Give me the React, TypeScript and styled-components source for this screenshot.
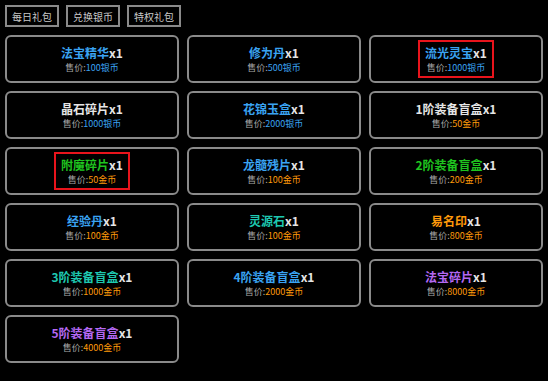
import React from 'react';
import styled, {createGlobalStyle} from "styled-components";

const Global = createGlobalStyle`
html, body {
  margin: 0;
  background: #000;
  font-family: "Noto Sans CJK SC", "Noto Sans", sans-serif;
}
`

const Page = styled.div`
padding: 5px;
display: flex;
flex-direction: column;
gap: 8px;
`

const Tabs = styled.div`
display: flex;
gap: 7px;
`

const Tab = styled.div`
width: 54px;
height: 22px;
box-sizing: border-box;
border: 2px solid #8a8a8a;
color: #c8c8c8;
font-size: 10px;
display: flex;
align-items: center;
justify-content: center;
`

const Grid = styled.div`
display: grid;
grid-template-columns: repeat(3, 174px);
grid-auto-rows: 48px;
gap: 8px;
`

const Card = styled.div`
box-sizing: border-box;
border: 2px solid #8a8a8a;
border-radius: 6px;
display: flex;
align-items: center;
justify-content: center;
`

// red frame only on the highlighted items
const Label = styled.div<{ $marked?: boolean }>`
border: 2px solid ${p => p.$marked ? '#e8141c' : 'transparent'};
padding: 2px 5px;
display: flex;
flex-direction: column;
align-items: center;
`

const Title = styled.div<{ $color: string }>`
font-size: 12px;
font-weight: bold;
line-height: 17px;
color: ${p => p.$color};
span { color: #e6e6e6; }
`

const Price = styled.div<{ $color: string }>`
font-size: 9px;
line-height: 13px;
color: #a8a8a8;
span { color: ${p => p.$color}; }
`

const BLUE = '#3aa3f2';
const WHITE = '#e6e6e6';
const GREEN = '#1fc41f';
const TEAL = '#1ec8b0';
const ORANGE = '#ff9a0a';
const PURPLE = '#b468f2';

const items = [
    {name: '法宝精华', color: BLUE, price: '100银币', pc: BLUE},
    {name: '修为丹', color: BLUE, price: '500银币', pc: BLUE},
    {name: '流光灵宝', color: BLUE, price: '1000银币', pc: BLUE, marked: true},
    {name: '晶石碎片', color: WHITE, price: '1000银币', pc: BLUE},
    {name: '花锦玉盒', color: BLUE, price: '2000银币', pc: BLUE},
    {name: '1阶装备盲盒', color: WHITE, price: '50金币', pc: ORANGE},
    {name: '附魔碎片', color: GREEN, price: '50金币', pc: ORANGE, marked: true},
    {name: '龙髓残片', color: BLUE, price: '100金币', pc: ORANGE},
    {name: '2阶装备盲盒', color: GREEN, price: '200金币', pc: ORANGE},
    {name: '经验丹', color: BLUE, price: '100金币', pc: ORANGE},
    {name: '灵源石', color: TEAL, price: '100金币', pc: ORANGE},
    {name: '易名印', color: ORANGE, price: '800金币', pc: ORANGE},
    {name: '3阶装备盲盒', color: TEAL, price: '1000金币', pc: ORANGE},
    {name: '4阶装备盲盒', color: BLUE, price: '2000金币', pc: ORANGE},
    {name: '法宝碎片', color: PURPLE, price: '8000金币', pc: ORANGE},
    {name: '5阶装备盲盒', color: PURPLE, price: '4000金币', pc: ORANGE},
];

const App = () => {
    return (
        <>
            <Global/>
            <Page>
                <Tabs>
                    <Tab>每日礼包</Tab>
                    <Tab>兑换银币</Tab>
                    <Tab>特权礼包</Tab>
                </Tabs>
                <Grid>
                    {items.map((it, i) => (
                        <Card key={i}>
                            <Label $marked={it.marked}>
                                <Title $color={it.color}>{it.name}<span>x1</span></Title>
                                <Price $color={it.pc}>售价:<span>{it.price}</span></Price>
                            </Label>
                        </Card>
                    ))}
                </Grid>
            </Page>
        </>
    )
}

export default App;
